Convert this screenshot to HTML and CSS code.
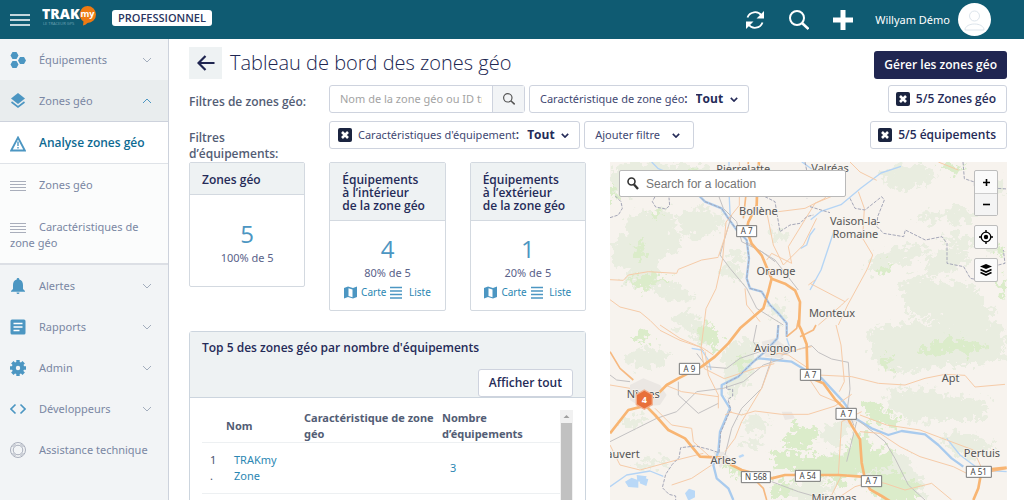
FILE: index.html
```html
<!DOCTYPE html>
<html lang="fr">
<head>
<meta charset="utf-8">
<meta name="viewport" content="width=device-width, initial-scale=1">
<title>Tableau de bord des zones géo</title>
<link rel="stylesheet" href="styles.css">
</head>
<body>
<svg class="sprite" aria-hidden="true">
  <symbol id="chevron" viewBox="0 0 10 6"><path d="M1 1l4 4 4-4" fill="none" stroke="currentColor"/></symbol>
  <symbol id="lines" viewBox="0 0 16 12"><path d="M0 1.500h16M0 4.500h16M0 7.500h16M0 10.500h16" fill="none" stroke="currentColor"/></symbol>
  <symbol id="list" viewBox="0 0 12 13"><path d="M0 1.500h12M0 5h12M0 8.500h12M0 12h12" fill="none" stroke="currentColor" stroke-width="1.600"/></symbol>
  <symbol id="folded-map" viewBox="0 0 13 13"><path d="M0 2l4-1.500 5 1.500 4-1.500v10.500l-4 1.500-5-1.500-4 1.500z" fill="currentColor"/><path d="M4.500 2.200l4 1.200v7.800l-4-1.200z" fill="#fff"/></symbol>
  <symbol id="clear" viewBox="0 0 14 14"><rect width="14" height="14" rx="2" fill="#1b2440"/><path d="M4 4l6 6M10 4l-6 6" stroke="#fff" stroke-width="2.600"/></symbol>
  <symbol id="loupe" viewBox="0 0 20 20"><circle cx="8" cy="8" r="7" fill="none" stroke="currentColor" stroke-width="2"/><path d="M13 13l6.500 6" stroke="currentColor" stroke-width="2.600"/></symbol>
</svg>

<header class="topbar">
  <button class="icon-btn" aria-label="Menu"><svg width="20" height="12" viewBox="0 0 20 12"><path d="M0 1h20M0 6h20M0 11h20" stroke="#fff" stroke-width="1.600"/></svg></button>
  <a class="logo" href="#" aria-label="TRAKmy">
    <svg width="55" height="21" viewBox="0 0 55 21">
      <text class="logo-name" x="0" y="14" >TRAK</text>
      <text class="logo-tag" x="1" y="20">LE TRACEUR GPS</text>
      <path d="M45.500 1a8.500 8.500 0 1 1 0 17q-2 2-4.500 2.500l.5-4A8.500 8.500 0 0 1 45.500 1z" fill="#ee7a12"/>
      <text class="logo-my" x="45.500" y="12" text-anchor="middle">my</text>
    </svg>
  </a>
  <span class="plan">PROFESSIONNEL</span>
  <div class="top-actions">
    <button class="icon-btn" aria-label="Actualiser"><svg width="20" height="20" viewBox="0 0 20 20"><path d="M2.500 7.500A8 8 0 0 1 16.500 5.500M17.500 12.500A8 8 0 0 1 3.500 14.500" fill="none" stroke="#fff" stroke-width="1.800"/><path d="M19 1v7.500h-7.500zM1 19v-7.500h7.500z" fill="#fff"/></svg></button>
    <button class="icon-btn" aria-label="Rechercher"><svg width="20" height="20"><use href="#loupe"/></svg></button>
    <button class="icon-btn" aria-label="Ajouter"><svg width="20" height="20" viewBox="0 0 20 20"><path d="M10 0v20M0 10h20" stroke="#fff" stroke-width="5"/></svg></button>
    <a class="user" href="#">Willyam Démo
      <svg width="33" height="33" viewBox="0 0 33 33"><circle cx="16.500" cy="16.500" r="16.500" fill="#fff"/><circle cx="16.500" cy="13" r="5" fill="none" stroke="#dde5ec"/><path d="M7 27c0-8 19-8 19 0z" fill="none" stroke="#dde5ec"/></svg>
    </a>
  </div>
</header>

<div class="shell">
<nav class="sidebar" aria-label="Navigation">
  <a class="item" href="#"><svg class="ico" viewBox="0 0 16 16"><path d="M2.500 0h4L8.500 3.500l-2 3.500h-4L.5 3.500zM2.500 9h4l2 3.500-2 3.500h-4L.5 12.500zM10 5h4l2 3.500-2 3.500h-4L8 8.500z" fill="currentColor"/></svg>Équipements<svg class="chev"><use href="#chevron"/></svg></a>
  <a class="item open" href="#"><svg class="ico" viewBox="0 0 16 16"><path d="M8 0l7 5.500-7 5.500-7-5.500z" fill="currentColor"/><path d="M1.500 9L8 14l6.500-5" fill="none" stroke="currentColor" stroke-width="1.600"/></svg>Zones géo<svg class="chev"><use href="#chevron"/></svg></a>
  <div class="submenu">
    <a class="sub active" href="#"><svg class="ico" viewBox="0 0 16 16"><path d="M8 1.500l6.800 13H1.200z" fill="none" stroke="currentColor" stroke-width="1.800"/><path d="M8 5.500v4.500M8 11v1.500" stroke="currentColor" stroke-width="1.400"/></svg>Analyse zones géo</a>
    <a class="sub" href="#"><svg class="ico thin"><use href="#lines"/></svg>Zones géo</a>
    <a class="sub" href="#"><svg class="ico thin"><use href="#lines"/></svg>Caractéristiques de zone géo</a>
  </div>
  <a class="item" href="#"><svg class="ico" viewBox="0 0 16 16"><path d="M8 0a1.200 1.200 0 0 1 1.200 1.500C12 2.200 13 4.500 13 7v4l2 2v.8H1V13l2-2V7c0-2.500 1-4.800 3.800-5.500A1.200 1.200 0 0 1 8 0zM6.500 14.500h3a1.500 1.500 0 0 1-3 0z" fill="currentColor"/></svg>Alertes<svg class="chev"><use href="#chevron"/></svg></a>
  <a class="item" href="#"><svg class="ico" viewBox="0 0 16 16"><rect x=".5" y=".5" width="15" height="15" rx="1.500" fill="currentColor"/><path d="M3.500 4.500h9M3.500 8h9M3.500 11.500h6" stroke="#fff" stroke-width="1.500"/></svg>Rapports<svg class="chev"><use href="#chevron"/></svg></a>
  <a class="item" href="#"><svg class="ico" viewBox="0 0 16 16"><circle cx="8" cy="8" r="4.200" fill="none" stroke="currentColor" stroke-width="4"/><path d="M8 0v3M8 13v3M0 8h3M13 8h3M2.300 2.300l2 2M11.700 11.700l2 2M2.300 13.700l2-2M11.700 4.300l2-2" stroke="currentColor" stroke-width="3.400"/></svg>Admin<svg class="chev"><use href="#chevron"/></svg></a>
  <a class="item" href="#"><svg class="ico" viewBox="0 0 16 16"><path d="M5.500 3.500L1 8l4.500 4.500M10.500 3.500L15 8l-4.500 4.500" fill="none" stroke="currentColor" stroke-width="1.600"/></svg>Développeurs<svg class="chev"><use href="#chevron"/></svg></a>
  <a class="item" href="#"><svg class="ico grey" viewBox="0 0 16 16"><g fill="none" stroke="currentColor"><circle cx="8" cy="8" r="7.500"/><circle cx="8" cy="8" r="4.800"/><path d="M2.500 5l3-3M13.500 5l-3-3M2.500 11l3 3M13.500 11l-3 3"/></g></svg>Assistance technique</a>
</nav>

<main class="page">
  <div class="title-row">
    <a class="back" href="#" aria-label="Retour"><svg width="18" height="16" viewBox="0 0 18 16"><path d="M17.500 8H2M8.500 1L1.500 8l7 7" fill="none" stroke="#1f2550" stroke-width="2.200"/></svg></a>
    <h1>Tableau de bord des zones géo</h1>
    <button class="primary">Gérer les zones géo</button>
  </div>

  <div class="filter-row">
    <label class="filter-label" for="zone-search">Filtres de zones géo:</label>
    <div class="search">
      <input id="zone-search" type="text" placeholder="Nom de la zone géo ou ID traceur">
      <button aria-label="Rechercher"><svg width="12" height="12"><use href="#loupe"/></svg></button>
    </div>
    <label class="box">Caractéristique de zone géo<b>:</b><select class="strong"><option>Tout</option></select><svg class="caret"><use href="#chevron"/></svg></label>
    <button class="box count"><svg width="14" height="14"><use href="#clear"/></svg>5/5 Zones géo</button>
  </div>
  <div class="filter-row">
    <span class="filter-label two-lines">Filtres d’équipements:</span>
    <label class="box"><svg class="lead" width="14" height="14"><use href="#clear"/></svg>Caractéristiques d'équipement<b>:</b><select class="strong"><option>Tout</option></select><svg class="caret"><use href="#chevron"/></svg></label>
    <label class="box add"><select aria-label="Ajouter filtre"><option>Ajouter filtre</option></select><svg class="caret"><use href="#chevron"/></svg></label>
    <button class="box count"><svg width="14" height="14"><use href="#clear"/></svg>5/5 équipements</button>
  </div>

  <div class="board">
    <div class="stats">
      <div class="cards">
        <section class="card">
          <h2>Zones géo</h2>
          <div class="card-body plain"><strong>5</strong><span>100% de 5</span></div>
        </section>
        <section class="card">
          <h2>Équipements<br>à l’intérieur<br>de la zone géo</h2>
          <div class="card-body"><strong>4</strong><span>80% de 5</span>
            <div class="links"><a href="#"><svg width="13" height="13"><use href="#folded-map"/></svg>Carte</a><a href="#"><svg width="12" height="13"><use href="#list"/></svg>&nbsp;Liste</a></div></div>
        </section>
        <section class="card">
          <h2>Équipements<br>à l’extérieur<br>de la zone géo</h2>
          <div class="card-body"><strong>1</strong><span>20% de 5</span>
            <div class="links"><a href="#"><svg width="13" height="13"><use href="#folded-map"/></svg>Carte</a><a href="#"><svg width="12" height="13"><use href="#list"/></svg>&nbsp;Liste</a></div></div>
        </section>
      </div>

      <section class="panel">
        <header class="panel-head">
          <h2>Top 5 des zones géo par nombre d'équipements</h2>
          <button class="box all">Afficher tout</button>
        </header>
        <div class="panel-body">
          <table>
            <colgroup><col class="c-num"><col class="c-name"><col class="c-kind"><col></colgroup>
            <thead><tr><th></th><th>Nom</th><th>Caractéristique de zone géo</th><th>Nombre d’équipements</th></tr></thead>
            <tbody><tr><td>1 .</td><td><a href="#">TRAKmy Zone</a></td><td></td><td><a href="#">3</a></td></tr></tbody>
          </table>
          <div class="scrollbar" aria-hidden="true"><svg width="13" height="13" viewBox="0 0 13 13"><path d="M3.500 8l3-3 3 3z" fill="#a0a0a0"/></svg><div class="thumb"></div></div>
        </div>
      </section>
    </div>

    <section class="map" aria-label="Carte">
      <svg class="tiles" viewBox="15 21 1191 1014" preserveAspectRatio="xMinYMin slice">
        <defs><filter id="ragged" x="-5%" y="-5%" width="110%" height="110%"><feTurbulence type="fractalNoise" baseFrequency=".05" numOctaves="3" seed="4"/><feDisplacementMap in="SourceGraphic" scale="70" xChannelSelector="R" yChannelSelector="G"/></filter></defs>
        <rect x="15" y="21" width="1400" height="1400" fill="#f7f3ee"/>
        <g filter="url(#ragged)">
          <path fill="#e9ede0" d="M15 40l60-20h110l40 20-20 40-60 10-50 30-80 10zM70 190l50-20 60-10 30 20-10 40 30 20-10 50-50 20-20 50-40 20-40-30-50-30 10-60 30-30zM215 190l40-30 60 0 20 40 0 30-50 20-50-10zM370 285l40 5 20 20-10 15-50-15zM350 335l35-10 35 30-10 20-50-5zM320 185l30-10 10 30-20 10zM500 215l50 20-10 25-40-10zM140 390l80 0 50 40-50 15-60-25zM60 360l100-5 50 30-50 20-110-15zM210 480l60-10 20 40-50 15-40-10zM500 450l40-10 10 30-20 30-30-10z
          M180 30l120 0 30 30-60 30-70-10zM830 60l50-30 60-10 60 40-60 40-80 10zM920 190l60-25 50 15-40 25zM1010 170l60-20 60 30-30 20-60 5zM870 280l70-10 40 20-60 30-60 10-60 30-20-20 20-40zM1000 250l60-20 60 40-40 20zM970 300l80-20 60 30-50 30-60 20-50 10zM880 380l70-20 60 30 60-10 60 30-30 80-60 30-60-30-70-10-20-50zM1040 440l70-20 60 50-30 60-90 10-40-50zM1130 60l50 10 20 50-50-10zM940 495l80 10 20 30-90 5zM1110 230l60 20 20 40-50 0z
          M800 520l120-20 120 20 150-10 15 90-80 30-110 0-100 20-90-10-30-60zM850 700l120 5 90 20 100 10-30 60-120 0-90 5-70-35zM1000 840l80-10 90 40-60 40-60-10zM410 790l50-10 40 20-20 30-50 0zM400 860l60-10 20 20-40 15zM60 590l60-15 80 20-20 30-70 20-50-20zM40 800l60-20 30 10-50 30zM350 590l60-40 60 20-20 50-20 60-60 50-10-70zM650 820l60-20 30 10-30 60-60 0zM600 920l100-30 100 20-50 60-110-20zM530 990l110-20 60 30-50 35-120 0zM780 900l130 0 60 130-140 10-50-70zM100 920l80-15 10 20-90 20zM230 500l80 0 20 80-50-20z"/>
          <path fill="#dbecca" d="M15 90l15 0 5 40-20 10zM85 260l25-5 10 40-10 30-15-20zM90 355l60 0 60 20-60 5-30 25-50-20zM815 345l30-15 15 10-20 20-25-5zM1180 380l20-20 5 60-20 10zM1000 30l60-5 20 20-50 5zM1160 280l30-5 15 15-20 10zM260 30l20 20-20 10zM945 580l60-30 80 5 60 20-20 20-80-10-40 20-60-10zM780 740l40 10 40 30 30 20-30 20-60-20-20-30zM550 800l40 10 60 20-30 30 0 30-70-10-20-20 30-20zM500 890l60 0 50 20 100-10 40-60 40-10 0 60 60-10 20 40-60 30-60 0-40 40-60-20-50 0-30-20-60-10zM380 620l50-20 20 15-40 30zM270 510l50-5 25 60-20 20-40-40zM90 550l20-25 30 20-30 20zM350 930l40 0 30 30-30 5zM790 960l80-10 60 30 20 55-120 0-40-30zM500 990l50-15 20 10-30 50-40 0zM130 170l40-10 10 20-30 10zM830 600l30 10-5 40-15-5z"/>
        </g>
        <g fill="#ebe7e3"><path d="M75 690l40-20 50 20 20 30-20 30-60 5-30-20zM470 560l40-10 40 30-20 30-50-5zM325 890l30 0 20 20-30 30zM700 760l40 5 20 30-30 15-30-20zM530 770l30 0 10 20-30 5z"/></g>
        <g fill="#b9d8f7"><path d="M60 980l20-12 20 8 0 22-30-2zM95 960l30 4-8 20-20-6zM110 965l20 8-6 20-20-8zM240 1015l12-14 18 6 0 20-20 10zM400 903l14-6 4 6-14 6z"/></g>
        <g fill="none" stroke="#b4d4f5" stroke-width="4" stroke-linejoin="round">
          <path d="M140 21l20 20 20 8M372 21l0 90 4 80M888 34l-60 20-60 45-60 50-60 20-31 25M630 220l-15 20-10 30-18 10M688 225l-20 60-20 60-33 60M15 995l50-35 70-12 40 16M260 580l30 5 20 30 8 30M1025 850l40 50 60 45 80 5M590 20l30 22M545 550l8 24-16 24"/>
        </g>
        <g fill="none" stroke="#a9cbee" stroke-width="7" stroke-linejoin="round">
          <path d="M280 120l20 20 50 20 20 30 25 35 30 30 7 55-7 60 10 30 35 10 25 40 25 25 25 30 0 40M520 510l-3 40-37 40-40 35-40 40-50 25 0 30 25 40-30 70-5 60-15 40 10 40 35 30 15 35M460 610l50 5 50 5 50 30 40 20 65 70 35 50 50 30 50 20 40-12 70 10 40 32 40 40 35 25"/>
        </g>
        <g fill="none" stroke="#c3c1c2" stroke-width="3" stroke-linejoin="round">
          <path d="M340 120l15 40 40 40 15 60 60 30 40 30M380 180l-35 120 30 40 50 60 30 60 80 50M455 510l-10 50 20 30-60 20-40 30-60-5-30-40M15 660l20 15 40 5M15 860l80-40 60-30 60-20 60-60 80-10 60-20 60-50 60-20M220 680l0 40 60 55 60-30M530 600l60-20 30-8 20 20 40 20 50 10 5 80-8 60 20 50M500 610l-30 90-60 60-30 60-20 80M740 780l100 80 30 50 40 80 50 45M500 980l80 30 70 20M755 800l-30 120M430 265l80 50 70 90"/>
        </g>
        <g fill="none" stroke="#f6cba8" stroke-width="3" stroke-linejoin="round">
          <path d="M15 374l40 2 15-16 60-10 85 5 5-12 70-28 50-8M15 434l30 22 60 15 30 25 30 30 60 30 60 20 12 12M403 21l0 130-40 50-10 110-20 90-30 60-15 120 10 60 60 30 90-30 60-15M415 180l30-20 40 10 20 100 30 60 60-60 40-80M485 315l15-20 60 30-10-50 80-130 60-25M520 170l80-10 60-30 20-60M1000 21l60 24M735 21l30 30 50 25M760 110l18 50-5 90 30 50-15 40-60 110-28 60M615 385l105 55M640 510l70-60 20-20M610 390l20-15M300 590l10 70 30 60 0 40M180 690l50 20 110 15M380 770l-20 10M150 760l50 50 60 10 5 40 55 50M370 770l40 10 40-12 80 10 80 0 80-25 50-35M605 660l40 60 60 25M640 660l100 5 80 20 80 5 60-20 60-12 60 3 30 35 90-8M693 510l15 60 10 110-15 30M500 620l-30 80-60 100-20 50-30 40M765 830l60 5 60 40 60 30 100 30 60 30M765 780l80 30 100 15 80 30 80 30 30 65M710 960l-30 60M700 960l10-160 60-30M15 690l60 10M165 510l60 40 70 30 30 20M15 870l30 60 60 15 110-30 80-20M200 990l60-20 60-40M790 975l50 10 60 20 80-20 60 50M500 600l120-25M340 305l30-90M610 640l-60-40-60-10M420 400l5 50 40 50M690 1035l60-40 70-20"/>
        </g>
        <g fill="none" stroke="#f6b981" stroke-width="5" stroke-linejoin="round">
          <path d="M15 590l30 50 40 35M450 975l25 25 10 35M585 545l40-20 8-15M1100 960l105-20M415 190l10-90 5-80M545 545l30-25 5-25"/>
        </g>
        <g fill="none" stroke="#f8b573" stroke-width="8" stroke-linejoin="round">
          <path d="M462 21l-4 40-3 90-25 50-5 25 15 40 30 35 17 40 13 30 40 15 30 20 15 35-3 70 6 12 17 45 2 75 8 25 40 17 35 48 25 25 20 45 30 50 5 70 10 50 15 30 35 20 40 25M500 370l-10 40-15 50-70 60-35 45-40 40-40 30-70 35-35 20-25 25-50 40-40 10-55 70M110 740l40 40 40 45 50 25 45 55 60 3 35 22 30 15 90 25 40-10 160 0 70 5M1205 938l-75 7-10 55-15 35"/>
        </g>
        <g fill="none" stroke="#a5a7b8" stroke-width="3" stroke-dasharray="10 4">
          <path d="M15 188l25-8 12-20-4-20-20-20M150 125l-8 15 10 16 30 6 12-10-2-24M480 125l30 15 15 90 30-20 30-5 20-20 20-5M600 21l6 30-10 40 10 40M280 120l20 20 50 20 20 30 25 35 30 30 7 55-7 60 10 30 35 10 25 40 25 25 25 30 0 40M520 510l-3 40-37 40-40 35-40 40-20 10-15 8 0 20 18 0 0 20-14 10 8 30-30 70-5 60-30-10-40-10-45 5-5 30-20 20-20 30-10 40 20 20 20 5 0 20-50 10M615 155l60 18M735 130l15 30 30 5 50-40 8 10-20 50-2 30 20 20 60 10 5-20 60 30 50-10 15 20 0 60 50 10 20 35 25 5M1180 330l20-5-5-40M1074 21l4 50 30 10 0 15 100 6"/>
        </g>
        <g class="towns" text-anchor="middle">
          <text x="415" y="55">Pierrelatte</text><text x="675" y="51">Valréas</text><text x="460" y="181">Bollène</text>
          <text x="750" y="210">Vaison-la-</text><text x="751" y="250">Romaine</text><text x="513" y="360">Orange</text>
          <text x="681" y="485">Monteux</text><text x="511" y="592">Avignon</text><text x="1037" y="682">Apt</text>
          <text x="115" y="730">Nîmes</text><text x="54" y="908">auvert</text><text x="355" y="927">Arles</text>
          <text x="1131" y="905">Pertuis</text><text x="687" y="1042">Miramas</text>
        </g>
        <g fill="#fff" stroke="#777" stroke-width="3">
          <path d="M395 212h60v33h-60zM223 625h61v33h-61zM586 643h61v33h-61zM693 760h61v33h-61zM409 950h87v33h-87zM571 946h75v33h-75zM769 962h61v33h-61zM1084 934h75v33h-75z"/>
        </g>
        <g class="roads" text-anchor="middle">
          <text x="425" y="238">A 7</text><text x="253" y="651">A 9</text><text x="616" y="669">A 7</text><text x="724" y="786">A 7</text>
          <text x="453" y="976">N 568</text><text x="608" y="972">A 54</text><text x="799" y="988">A 7</text><text x="1121" y="960">A 51</text>
        </g>
        <path d="M118 705l24 14v30l-24 14-24-14v-30z" fill="#e8703a" stroke="#f0b08f" stroke-width="4"/>
        <text class="pin" x="118" y="743" text-anchor="middle">4</text>
      </svg>
      <div class="overlay">
        <label class="map-search"><svg width="12" height="13" viewBox="0 0 12 13"><circle cx="4.500" cy="4.500" r="3.500" fill="none" stroke="#333" stroke-width="1.600"/><path d="M7 7.500l4 4.500" stroke="#333" stroke-width="2.400"/></svg><input type="text" placeholder="Search for a location" aria-label="Search for a location"></label>
        <div class="tools">
          <div class="zoom"><button aria-label="Zoom avant"><svg width="7" height="7" viewBox="0 0 7 7"><path d="M3.500 0v7M0 3.500h7" stroke="#000" stroke-width="1.600"/></svg></button><button aria-label="Zoom arrière"><svg width="7" height="7" viewBox="0 0 7 7"><path d="M0 3.500h7" stroke="#000" stroke-width="1.600"/></svg></button></div>
          <button class="tool" aria-label="Ma position"><svg width="14" height="14" viewBox="0 0 14 14"><circle cx="7" cy="7" r="4.800" fill="none" stroke="#000" stroke-width="1.300"/><circle cx="7" cy="7" r="2.200"/><path d="M7 0v2.500M7 11.500V14M0 7h2.500M11.500 7H14" stroke="#000" stroke-width="1.400"/></svg></button>
          <button class="tool" aria-label="Calques"><svg width="12" height="12" viewBox="0 0 12 12"><path d="M6 0l6 2.500L6 5 0 2.500z"/><path d="M.5 5.500L6 8l5.500-2.500M.5 8.500L6 11l5.500-2.500" fill="none" stroke="#000" stroke-width="1.600"/></svg></button>
        </div>
      </div>
    </section>
  </div>
</main>
</div>
</body>
</html>
```

FILE: styles.css
```css
* { box-sizing: border-box; }

:root {
  --regular: 11px/16px "Noto Sans", "Open Sans", sans-serif;
  --strong: 600 12px/16px "Open Sans", "Noto Sans", sans-serif;
}

body {
  margin: 0;
  height: 100vh;
  overflow: hidden;
  display: flex;
  flex-direction: column;
  background: #fff;
  color: #4a5470;
  font: var(--regular);
}

h1, h2 { margin: 0; font-weight: 400; }
a { text-decoration: none; color: #2b87b3; }
button, input, select { font: inherit; color: inherit; margin: 0; }
button { padding: 0; border: 0; background: none; cursor: pointer; }
svg { display: block; flex: none; }
.sprite { position: absolute; width: 0; height: 0; }

/* Top bar */
.topbar {
  display: flex;
  align-items: center;
  flex: none;
  height: 39px;
  padding: 0 33px 0 10px;
  background: #0f5b72;
  color: #fff;
}
.logo { margin-left: 12px; padding-bottom: 8px; }
.logo text { fill: #fff; font-family: "Open Sans", sans-serif; }
.logo .logo-name { font-size: 14px; font-weight: 800; }
.logo .logo-tag { font-size: 4px; fill: #6fa5b5; }
.logo .logo-my { font-size: 9px; font-weight: 700; }
.plan {
  margin: 0 0 3px 15px;
  padding: 0 6px;
  border-radius: 3px;
  background: #fff;
  color: #2a3560;
  font: var(--strong);
  font-size: 11px;
}
.top-actions { display: flex; align-items: center; gap: 24px; margin-left: auto; }
.user { display: flex; align-items: center; gap: 8px; margin-left: -2px; color: #fff; }

.shell { display: flex; flex: 1; min-height: 0; }

/* Sidebar */
.sidebar {
  flex: none;
  width: 169px;
  background: #f2f4f6;
  border-right: 1px solid #cdd2dc;
  overflow: hidden;
}
.item {
  display: flex;
  align-items: center;
  height: 41px;
  padding: 0 16px 0 10px;
  color: #7a87a3;
  white-space: nowrap;
}
.ico { width: 16px; height: 16px; margin-right: 13px; color: #4c96c2; }
.ico.thin { height: 12px; color: #a9aebb; }
.ico.grey { color: #a9aebb; }
.chev { width: 10px; height: 6px; margin-left: auto; color: #a3adbd; }
.open { background: #e9edee; border-bottom: 1px solid #cdd2dc; height: 42px; }
.open .chev { transform: rotate(180deg); color: #4c96c2; }
.submenu { margin-right: -1px; border-bottom: 2px solid #dcdfe5; }
.sub {
  display: block;
  padding: 13px 16px 13px 10px;
  background: #fbfcfc;
  border-right: 1px solid #cdd2dc;
  color: #7a87a3;
}
.sub:last-child { padding-bottom: 12px; }
.sub .ico { display: inline-block; vertical-align: middle; margin-top: -2px; margin-bottom: -2px; }
.sub.active { padding-bottom: 12px; background: #fff; border-right-color: #fff; border-bottom: 1px solid #dfe3e8; color: #0d6a92; font: var(--strong); }

/* Page */
.page {
  display: flex;
  flex-direction: column;
  flex: 1;
  min-width: 0;
  padding: 8px 17px 0 20px;
}
.title-row { display: flex; align-items: center; height: 32px; margin-bottom: 6px; }
.back {
  display: flex;
  align-items: center;
  justify-content: center;
  width: 33px;
  height: 32px;
  background: #eef2f3;
}
h1 { margin-left: 8px; font: 300 20px/28px "Open Sans", "Noto Sans", sans-serif; color: #202651; }
.primary {
  align-self: flex-end;
  height: 28px;
  margin-left: auto;
  padding: 0 10px;
  border-radius: 3px;
  background: #202651;
  color: #fff;
  font: var(--strong);
}
.filter-row { display: flex; align-items: center; gap: 4px; height: 28px; margin-bottom: 8px; }
.filter-label { width: 136px; padding-top: 5px; font: var(--strong); color: #535d75; }
.two-lines { align-self: flex-start; padding: 9px 40px 0 0; }
.box {
  display: inline-flex;
  align-items: center;
  height: 28px;
  padding: 0 10px;
  border: 1px solid #ced3de;
  border-radius: 3px;
  background: #fff;
  color: #3f4872;
  white-space: nowrap;
}
.box b, .box .strong, .count, .all { color: #252b58; font: var(--strong); }
.box .strong { font-weight: 700; }
.box select { appearance: none; border: 0; padding: 0; background: none; outline: 0; }
.box .strong { margin-left: 8px; }
.caret { width: 8px; height: 5px; margin-left: 6px; color: #252b58; stroke-width: 2; }
.add .caret { margin-left: 12px; margin-right: 3px; }
.lead { margin: 0 6px 0 -2px; }
.count { margin-left: auto; padding-left: 7px; gap: 6px; }
.search { display: flex; height: 28px; width: 196px; border: 1px solid #ced3de; border-radius: 3px; }
.search input { flex: 1; min-width: 0; padding: 0 10px; border: 0; background: none; outline: 0; }
.search input::placeholder { color: #a3a3a3; opacity: 1; }
.search button { display: flex; align-items: center; justify-content: center; width: 32px; border-left: 1px solid #ced3de; background: #f2f4f6; color: #555; }

.board { display: grid; grid-template-columns: 1fr 1fr; gap: 24px; flex: 1; min-height: 0; margin-top: 5px; }
.stats { min-width: 0; min-height: 0; overflow: hidden; }
.cards { display: grid; grid-template-columns: repeat(3, 1fr); gap: 24px; align-items: start; }
.card { border: 1px solid #d3d9e0; border-radius: 2px; }
.card h2 {
  padding: 10px 10px 8px 12px;
  border-bottom: 1px solid #d3d9e0;
  background: #eef2f3;
  color: #252b58;
  font: var(--strong);
  line-height: 13px;
}
.card-body { display: flex; flex-direction: column; align-items: center; height: 89px; padding-top: 13px; color: #5a628a; }
.card-body.plain { height: 91px; padding-top: 24px; }
.card-body strong { font: 24px/30px "Open Sans", sans-serif; color: #4c96c2; }
.card-body span { margin-top: 1px; }
.links { display: flex; gap: 4px; margin-top: 4px; font-size: 10px; line-height: 14px; }
.links a { display: flex; align-items: center; gap: 4px; }
.links svg { color: #4c96c2; }

.panel { margin-top: 20px; border: 1px solid #ccd5de; border-radius: 3px 3px 0 0; }
.panel-head { display: flex; flex-direction: column; padding: 8px 12px 0; background: #eef2f3; border-bottom: 1px solid #ccd5de; }
.panel-head h2 { font: var(--strong); color: #252b58; }
.all { align-self: flex-end; margin-top: 13px; }
.panel-body { display: flex; height: 240px; padding: 12px 12px 0; }
table { flex: 1; width: 0; table-layout: fixed; border-collapse: collapse; align-self: flex-start; }
.c-num { width: 24px; }
.c-name { width: 78px; }
.c-kind { width: 138px; }
th { padding: 0; text-align: left; font: var(--regular); font-weight: 700; color: #535d75; }
td { padding: 9px 8px; }
tr { border-bottom: 1px solid #edf0f2; }
.scrollbar { display: flex; flex-direction: column; width: 13px; background: #f1f1f1; }
.thumb { flex: 1; margin: 0 1px; background: #c1c1c1; }

/* Map */
.map { position: relative; overflow: hidden; min-height: 0; background: #f7f3ee; }
.tiles { width: 100%; height: 100%; }
.towns text { font: 33px "Noto Sans", sans-serif; fill: #555; paint-order: stroke; stroke: #f7f3ee; stroke-width: 5px; }
.roads text { font: 24px "Noto Sans", sans-serif; fill: #444; }
.pin { font: 700 27px "Open Sans", sans-serif; fill: #fff; }
.overlay {
  position: absolute;
  inset: 0;
  display: flex;
  align-items: flex-start;
  justify-content: space-between;
  padding: 8px 9px 0 9px;
}
.map-search {
  display: flex;
  align-items: center;
  gap: 7px;
  width: 227px;
  height: 27px;
  padding: 0 7px;
  border: 1px solid #b9b9b9;
  border-radius: 2px;
  background: #fff;
}
.map-search input { flex: 1; min-width: 0; padding: 0; border: 0; outline: 0; font: 12px "Liberation Sans", Arial, sans-serif; }
.map-search input::placeholder { color: #757575; opacity: 1; }
.tools { display: flex; flex-direction: column; gap: 9px; }
.zoom, .tool { border: 1px solid #bdbdbd; border-radius: 2px; background: #fafafa; width: 24px; }
.zoom button, .tool { display: flex; align-items: center; justify-content: center; height: 22px; width: 100%; }
.zoom button + button { border-top: 1px solid #ccc; background: #f4f4f4; }
.tool { height: 24px; width: 24px; border: 1px solid #bdbdbd; }
```
